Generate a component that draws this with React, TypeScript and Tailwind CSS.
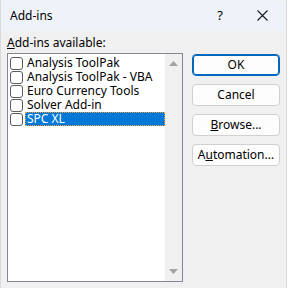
import React from "react";

const font = { fontFamily: '"Noto Sans", "Open Sans", sans-serif' };

function Check() {
  return <div className="w-[13px] h-[13px] shrink-0 rounded-[3px] border border-[#5c5c5c] bg-white" />;
}

const items = ["Analysis ToolPak", "Analysis ToolPak - VBA", "Euro Currency Tools", "Solver Add-in", "SPC XL"];

function Btn({ children, primary }: { children: React.ReactNode; primary?: boolean }) {
  return (
    <div
      className={
        "h-[22px] w-[88px] rounded-[4px] flex items-center justify-center text-[12px] leading-[16px] text-black bg-[#fdfdfd] " +
        (primary ? "border border-[#0067c0] shadow-[inset_0_0_0_1px_#0067c0]" : "border border-[#d0d0d0]")
      }
    >
      {children}
    </div>
  );
}

export default function App() {
  return (
    <div className="w-[287px] h-[288px] bg-[#f0f0f0] flex flex-col overflow-hidden border-x border-[#dadada]" style={font}>
      <div className="h-[31px] bg-[#eef3f9] rounded-tr-[8px] flex items-center text-[12px] text-black shrink-0">
        <span className="ml-[9px]">Add-ins</span>
        <span className="ml-auto mr-[34px] text-[13px]">?</span>
        <svg width="11" height="11" viewBox="0 0 11 11" className="mr-[18px]">
          <path d="M0.5 0.5 L10.5 10.5 M10.5 0.5 L0.5 10.5" stroke="#1a1a1a" strokeWidth="1.1" />
        </svg>
      </div>
      <div className="flex flex-col pl-[6px]">
        <div className="h-[22px] flex items-end text-[12px] text-black leading-none pb-[4px]">
          <span><span className="underline">A</span>dd-ins available:</span>
        </div>
        <div className="flex flex-row">
          <div className="w-[176px] h-[229px] border border-[#828790] bg-white flex flex-row">
            <div className="flex-1 flex flex-col pt-[2px]">
              {items.map((t, i) => (
                <div key={t} className="h-[14px] flex items-center pl-[2px]">
                  <Check />
                  <div
                    className={
                      "ml-[2px] h-[14px] flex items-center text-[12px] leading-[12px] pl-[1px] whitespace-nowrap " +
                      (i === 4 ? "bg-[#0078d7] text-white border border-dotted border-[#f0a040] w-[140px]" : "text-black border border-transparent")
                    }
                  >
                    {t}
                  </div>
                </div>
              ))}
            </div>
            <div className="w-[17px] bg-[#f0f0f0] flex flex-col items-center justify-between py-[7px]">
              <svg width="9" height="5" viewBox="0 0 9 5"><path d="M0 5 L4.5 0 L9 5 Z" fill="#a3a3a3" /></svg>
              <svg width="9" height="5" viewBox="0 0 9 5"><path d="M0 0 L4.5 5 L9 0 Z" fill="#a3a3a3" /></svg>
            </div>
          </div>
          <div className="ml-[9px] flex flex-col gap-[8px] mt-[1px]">
            <Btn primary>OK</Btn>
            <Btn>Cancel</Btn>
            <Btn><span><span className="underline">B</span>rowse...</span></Btn>
            <Btn><span>A<span className="underline">u</span>tomation...</span></Btn>
          </div>
        </div>
      </div>
    </div>
  );
}
